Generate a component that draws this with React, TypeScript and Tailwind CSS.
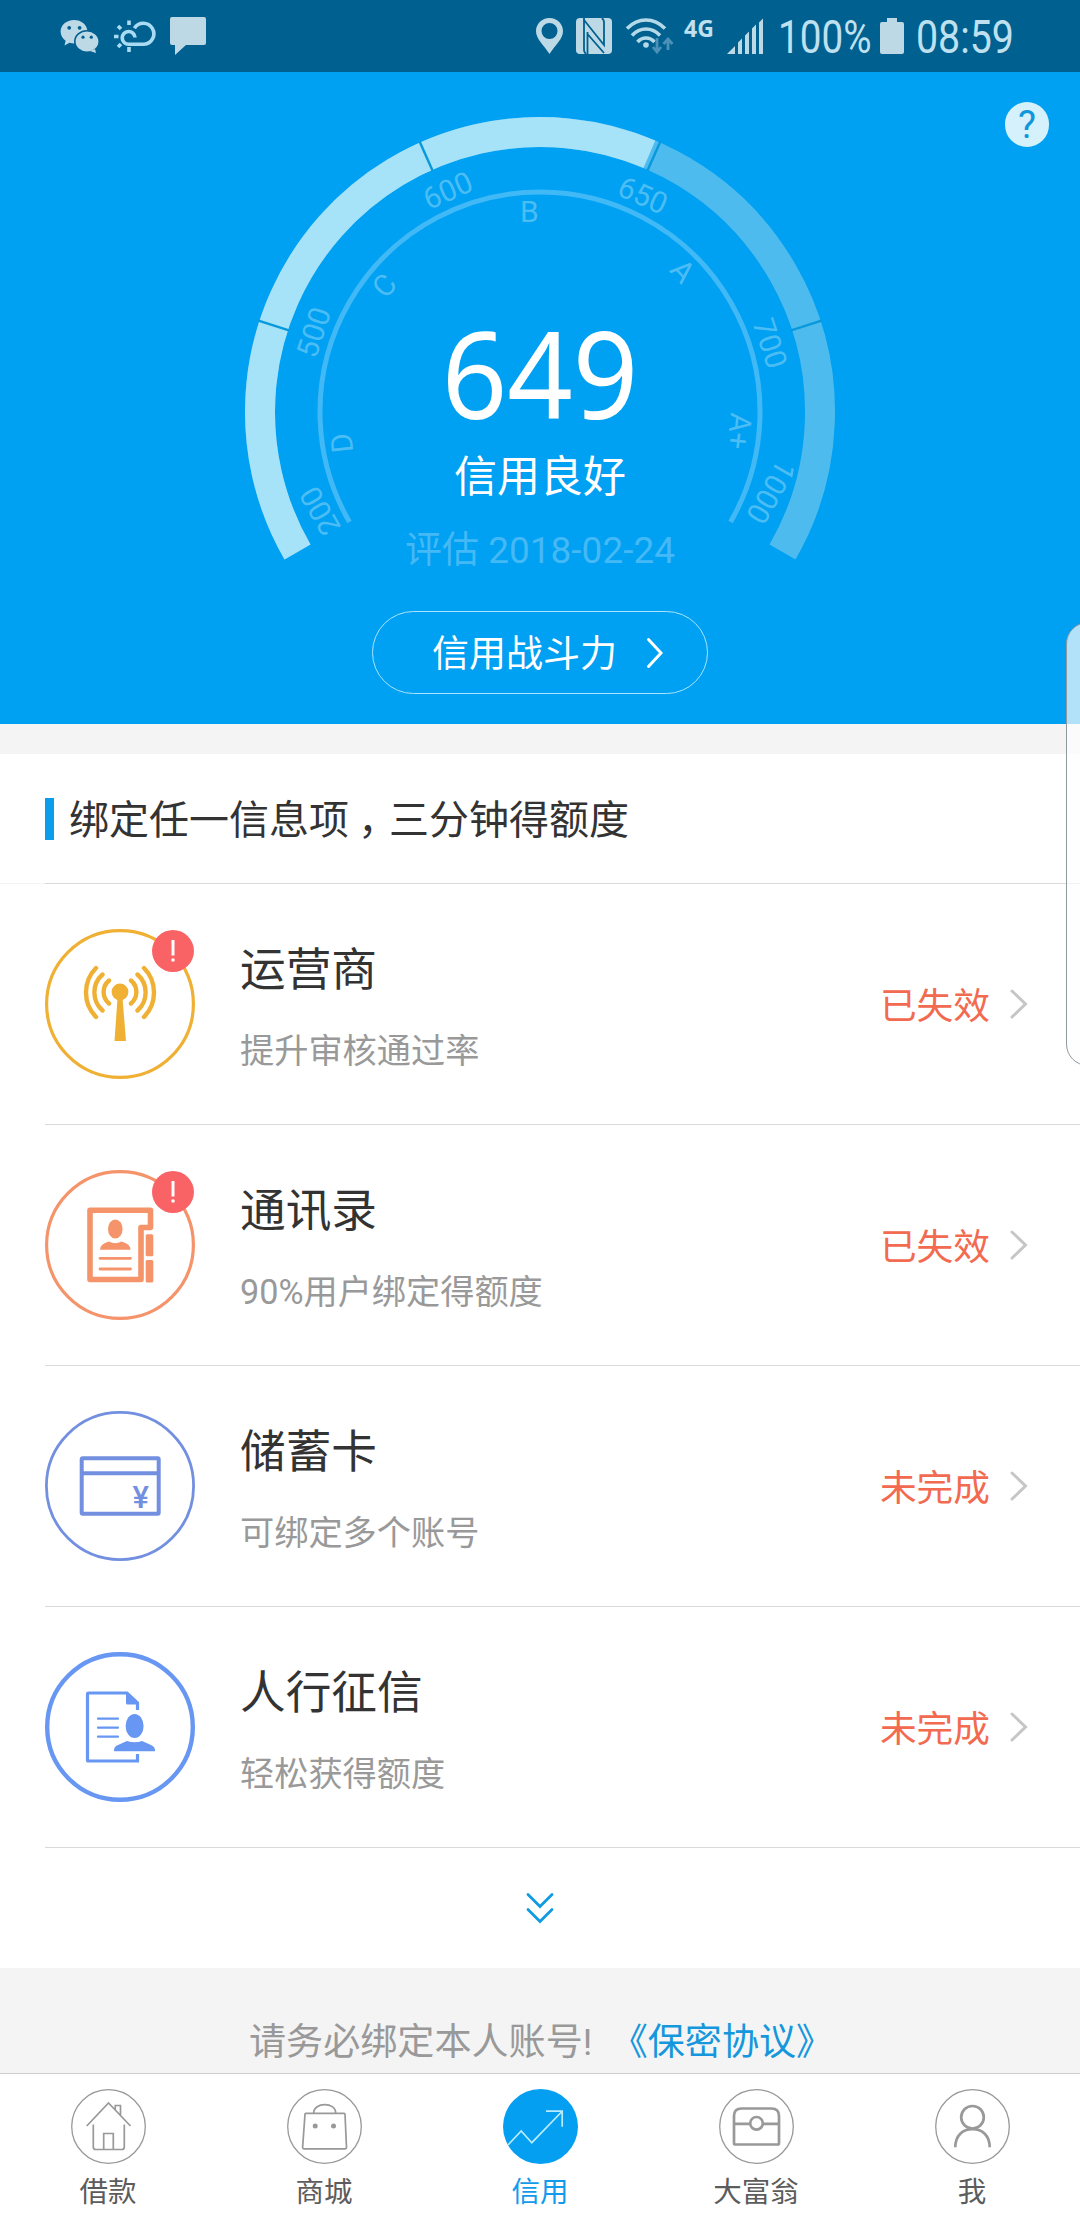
import type { ReactNode } from 'react';

const CX = 540;
const CY = 340;

// Degrees are measured clockwise from 12 o'clock.
function point(r: number, deg: number) {
  const a = (deg * Math.PI) / 180;
  return [CX + r * Math.sin(a), CY - r * Math.cos(a)];
}

function arc(r: number, from: number, to: number) {
  const [x1, y1] = point(r, from);
  const [x2, y2] = point(r, to);
  return `M${x1} ${y1}A${r} ${r} 0 ${to - from > 180 ? 1 : 0} 1 ${x2} ${y2}`;
}

function tick(deg: number) {
  const [x1, y1] = point(264, deg);
  const [x2, y2] = point(296, deg);
  return `M${x1} ${y1}L${x2} ${y2}`;
}

// dx shifts the label along its own baseline, away from the tick.
const MARKS = [
  { text: '200', deg: -120, r: 229.5, dx: -1 },
  { text: '500', deg: -72, r: 229.5, dx: -19.5 },
  { text: '600', deg: -24, r: 229.5, dx: -19.5 },
  { text: '650', deg: 24, r: 229.5, dx: -19.5 },
  { text: '700', deg: 72, r: 229.5, dx: -19.5 },
  { text: '1000', deg: 120, r: 229.5, dx: -80 },
  { text: 'D', deg: -96, r: 190, dx: -20 },
  { text: 'C', deg: -48, r: 190, dx: -20 },
  { text: 'B', deg: 0, r: 190, dx: -20 },
  { text: 'A', deg: 48, r: 190, dx: -19 },
  { text: 'A+', deg: 96, r: 190, dx: -20 },
];

function Gauge() {
  return (
    <svg className="absolute inset-0" width="1080" height="652" viewBox="0 0 1080 652" fill="none">
      <path d={arc(280, -120, 120)} stroke="#4dbbee" strokeWidth="30" />
      <path d={arc(280, -120, 23)} stroke="#a6e2f8" strokeWidth="30" />
      {[-72, -24, 24, 72].map((d) => (
        <path key={d} d={tick(d)} stroke="#0899db" strokeWidth="2.4" />
      ))}
      <path d={arc(220, -120, 120)} stroke="#40b9f6" strokeWidth="5" />
      <g fill="#4bbdf5" className="font-[Roboto,sans-serif] text-[30px]">
        {MARKS.map((m) => (
          <text key={m.text} x={CX + m.dx} y={CY - m.r} transform={`rotate(${m.deg} ${CX} ${CY})`}>
            {m.text}
          </text>
        ))}
      </g>
    </svg>
  );
}

function StatusBar() {
  return (
    <header className="flex h-[72px] items-center bg-[#00608f] text-[#bfe0ef]">
      <svg className="ml-[60px]" width="40" height="34" viewBox="0 0 40 34" fill="#bcd9e5">
        <path d="M14 1C6.500 1 .6 6 .6 12.500c0 4 2 7 5 9.200L4.500 26.500l5-2.700c1.500.4 3 .6 4.500.6 7.500 0 13.400-5.300 13.400-11.900S21.500 1 14 1z" />
        <ellipse cx="27" cy="22.500" rx="12.200" ry="10.800" stroke="#00608f" strokeWidth="1.600" />
        <path d="M30 32l6 2-1-4z" />
        <g fill="#00608f">
          <circle cx="9.200" cy="8.800" r="1.900" />
          <circle cx="19.600" cy="8.800" r="1.900" />
          <circle cx="23" cy="18.200" r="1.600" />
          <circle cx="31.300" cy="18.200" r="1.600" />
        </g>
      </svg>
      <svg className="ml-[13px]" width="43" height="34" viewBox="0 0 43 34" fill="none" stroke="#a9dcf3" strokeWidth="3.600">
        <path d="M22 18.500a6.400 6.400 0 1 0-6.300 6.800H31a10.500 10.500 0 1 0-9.600-16" />
        <path d="M16 1.500v4.500M16 28v5M1 17.500h4.500M5 7l3 3M5 28l3-3" />
      </svg>
      <svg className="ml-[14px]" width="36" height="38" viewBox="0 0 36 38" fill="#bcd9e5">
        <path d="M2 0h32q2 0 2 2v24q0 2-2 2H16L5 38V28H2q-2 0-2-2V2q0-2 2-2z" />
      </svg>

      <svg className="ml-[330px]" width="27" height="36" viewBox="0 0 27 36" fill="#bcd9e5">
        <path fillRule="evenodd" d="M13.500 0C6 0 0 5.800 0 13c0 8 7 13 13.500 23C20 26 27 21 27 13 27 5.800 21 0 13.500 0zm0 5a8 8 0 1 1 0 16 8 8 0 0 1 0-16z" />
      </svg>
      <svg className="ml-[13px]" width="36" height="36" viewBox="0 0 36 36">
        <rect width="36" height="36" rx="4" fill="#bcd9e5" />
        <g fill="none" stroke="#00608f" strokeWidth="1.800">
          <path d="M8 0v32q0 2 2 4" />
          <path d="M8 2l20 25V4q0-2-2-4" />
          <path d="M11.500 16l16.500 19M11.500 14v22" />
        </g>
      </svg>
      <svg className="ml-[13px]" width="51" height="36" viewBox="0 0 51 36" fill="none" stroke="#b4daea" strokeWidth="3.600">
        <path d="M2 10.500q8.500-8.500 19-8.500t19 8.500M7 17.500q6-6.500 14-6.500t14 6.500M12.500 24q3.500-4 8.500-4t8.500 4" />
        <circle cx="21" cy="27" r="2.800" fill="#b4daea" stroke="none" />
        <g stroke="#4b91b8" strokeWidth="2.800">
          <path d="M32 20v14M28 29l4 5 4-5" />
          <path d="M43 32V20M38.500 26l4.500-5 4.500 5" />
        </g>
      </svg>
      <span className="mb-[16px] ml-[8px] w-[30px] font-['Open_Sans',sans-serif] text-[23px] leading-none font-bold">4G</span>
      <svg className="ml-[13px]" width="37" height="36" viewBox="0 0 37 36" fill="#bcd9e5">
        <path d="M0 36L8 28v8zM11 24.500l4-4V36h-4zM18 17.500l4-4V36h-4zM25 10.500l4-4V36h-4zM32 4.500l4-4V36h-4z" />
      </svg>
      <span className="mt-[2px] ml-[14px] w-[102px] origin-left scale-x-[0.84] font-[Roboto,sans-serif] text-[46px] leading-none">100%</span>
      <svg width="24" height="36" viewBox="0 0 24 36" fill="#bcd9e5">
        <path d="M7 0h10v4h5q2 0 2 2v28q0 2-2 2H2q-2 0-2-2V6q0-2 2-2h5z" />
      </svg>
      <span className="mt-[2px] ml-[12px] w-[100px] origin-left scale-x-[0.855] font-[Roboto,sans-serif] text-[46px] leading-none">08:59</span>
    </header>
  );
}

interface Item {
  title: string;
  desc: string;
  status: string;
  color: string;
  ring: number;
  alert?: boolean;
  icon: ReactNode;
}

const ITEMS: Item[] = [
  {
    title: '运营商',
    desc: '提升审核通过率',
    status: '已失效',
    color: '#efb034',
    ring: 3.2,
    alert: true,
    icon: (
      <>
        <circle cx="75" cy="63" r="8.400" fill="currentColor" stroke="none" />
        <path d="M72.500 69h5l3.500 43H69.500z" fill="currentColor" stroke="none" />
        <path
          d="M86 51.500a15 15 0 0 1 0 23M92.500 45.500a24 24 0 0 1 0 36M99 39a35 35 0 0 1 0 49M64 51.500a15 15 0 0 0 0 23M57.500 45.500a24 24 0 0 0 0 36M51 39a35 35 0 0 0 0 49"
          strokeWidth="4.400"
          strokeLinecap="round"
        />
      </>
    ),
  },
  {
    title: '通讯录',
    desc: '90%用户绑定得额度',
    status: '已失效',
    color: '#f5936a',
    ring: 3.2,
    alert: true,
    icon: (
      <>
        <path d="M45 40.300h60.500V57.500H96v52H45z" strokeWidth="5.600" strokeLinejoin="round" />
        <rect x="100.700" y="64.300" width="7.600" height="22" rx="1.500" fill="currentColor" stroke="none" />
        <rect x="100.700" y="90" width="7.600" height="22.600" rx="1.500" fill="currentColor" stroke="none" />
        <ellipse cx="70.300" cy="59" rx="7.300" ry="9.600" fill="currentColor" stroke="none" />
        <path d="M55 79.800q0-6 9-8.300 6 3.500 12.500 0 9 2.300 9 8.300z" fill="currentColor" stroke="none" />
        <path d="M55 88.300h30.500M55 99h30.500" strokeWidth="2.800" strokeLinecap="round" />
      </>
    ),
  },
  {
    title: '储蓄卡',
    desc: '可绑定多个账号',
    status: '未完成',
    color: '#7390e0',
    ring: 2.8,
    icon: (
      <>
        <rect x="36.700" y="47.300" width="77" height="55.400" rx="1" strokeWidth="4" />
        <path d="M36 62.200h78" strokeWidth="4" />
        <text x="95.700" y="96.500" textAnchor="middle" fill="currentColor" stroke="none" className="font-[Roboto,sans-serif] text-[31px] font-medium">
          ¥
        </text>
      </>
    ),
  },
  {
    title: '人行征信',
    desc: '轻松获得额度',
    status: '未完成',
    color: '#6797f3',
    ring: 4.4,
    icon: (
      <>
        <path d="M92.500 58V51L82 41H43.500q-1 0-1 1v66q0 1 1 1h49v-7" strokeWidth="3.200" />
        <path d="M81 40l13 12.500H82.500q-1.500 0-1.500-1.500z" fill="currentColor" stroke="none" />
        <path d="M53 66.700h20M53 75.700h20M53 84.700h20" strokeWidth="2.200" strokeLinecap="round" />
        <ellipse cx="89.600" cy="74" rx="9" ry="12" fill="currentColor" stroke="none" />
        <path d="M69 99.300q-.5-4.500 4-6.300l9-4q7.500 2.500 15 0l9 4q4.500 2 4 6.300z" fill="currentColor" stroke="none" />
      </>
    ),
  },
];

function ItemRow({ item }: { item: Item }) {
  return (
    <li className="flex h-[241px] border-b border-[#d9d9d9]">
      <div className="relative mt-[45px] h-[150px] w-[150px]" style={{ color: item.color }}>
        <svg width="150" height="150" viewBox="0 0 150 150" fill="none" stroke="currentColor">
          <circle cx="75" cy="75" r={75 - item.ring / 2} strokeWidth={item.ring} />
          {item.icon}
        </svg>
        {item.alert && (
          <span className="absolute top-[1px] right-[1px] flex size-[42px] items-center justify-center rounded-full bg-[#fa6365]">
            <svg width="4" height="22" viewBox="0 0 4 22" fill="#fff">
              <path d="M.5 0h3v15.500h-3z" />
              <circle cx="2" cy="20" r="1.800" />
            </svg>
          </span>
        )}
      </div>
      <div className="ml-[45px] flex-1 pt-[54px]">
        <div className="text-[45.700px] leading-[66px] text-[#333]">{item.title}</div>
        <div className="mt-[23px] text-[34.200px] leading-[48px] text-[#999]">{item.desc}</div>
      </div>
      <span className="mt-[97px] text-[36.700px] leading-[52px] text-[#f26a50]">{item.status}</span>
      <svg className="mt-[104px] mr-[52px] ml-5" width="18" height="32" viewBox="0 0 18 32" fill="none" stroke="#c6c6c6" strokeWidth="3" strokeLinecap="round">
        <path d="M2 3l13.500 13L2 29" />
      </svg>
    </li>
  );
}

const TABS: { label: string; active?: boolean; icon: ReactNode }[] = [
  {
    label: '借款',
    icon: (
      <path d="M15.700 37L37.500 14l22 23M44.300 20.500v-4h5.200V26M22.300 35.500V58q0 2.500 2.500 2.500h26q2.500 0 2.500-2.500V35.500M32.700 60.500v-16h9.600v16" />
    ),
  },
  {
    label: '商城',
    icon: (
      <>
        <path d="M18.800 24.300h38.400q.8 0 .8.800l1.500 33.500q0 1.200-1.200 1.200H16.800q-1.200 0-1.200-1.200L18 25.100q0-.8.800-.8zM26.700 24c0-11 22-11.500 22 0" />
        <circle cx="28.200" cy="37" r="2.500" fill="#999" stroke="none" />
        <circle cx="46.500" cy="37" r="2.500" fill="#999" stroke="none" />
      </>
    ),
  },
  {
    label: '信用',
    active: true,
    icon: <path d="M5 56l13.200-14 10.600 11.700L59 22.500M43 22.200h16.200v15.500" stroke="#b9ecff" strokeWidth="1.700" />,
  },
  {
    label: '大富翁',
    icon: (
      <g strokeWidth="2.700">
        <path d="M15 54V27q0-7.500 7.500-7.500h30Q60 19.500 60 27v27q0 1.500-1.500 1.500h-42Q15 55.500 15 54zM15 34.800h16.500M43.500 34.800H60" />
        <circle cx="37.500" cy="34.300" r="6.300" />
      </g>
    ),
  },
  {
    label: '我',
    icon: (
      <g strokeWidth="2.700">
        <circle cx="37.500" cy="28.300" r="11.300" />
        <path d="M20.300 58.300c0-12 7.500-18.200 17.200-18.200s17.200 6.200 17.200 18.200" />
      </g>
    ),
  },
];

function TabBar() {
  return (
    <nav className="grid h-[147px] grid-cols-5 border-t border-[#cfcfcf] bg-white">
      {TABS.map((t) => (
        <div key={t.label} className="flex flex-col items-center pt-[15px]">
          <svg width="75" height="75" viewBox="0 0 75 75" fill="none" stroke="#999" strokeWidth="1.700">
            {t.active ? (
              <circle cx="37.500" cy="37.500" r="37.500" fill="#049ff1" stroke="none" />
            ) : (
              <circle cx="37.500" cy="37.500" r="36.800" strokeWidth="1.300" />
            )}
            {t.icon}
          </svg>
          <span className={t.active ? 'mt-[9px] text-[28.500px] leading-[40px] text-[#119bea]' : 'mt-[9px] text-[28.500px] leading-[40px] text-[#5c5c5c]'}>
            {t.label}
          </span>
        </div>
      ))}
    </nav>
  );
}

export default function App() {
  return (
    <div className="relative flex h-[2220px] w-[1080px] flex-col overflow-hidden bg-white font-[Roboto,'Noto_Sans_CJK_SC',sans-serif] whitespace-nowrap">
      <StatusBar />
      <section className="relative flex h-[652px] flex-col items-center bg-[#00a0f2] text-white">
        <Gauge />
        <span className="absolute top-[30px] right-[31px] flex h-[45px] w-[44px] items-center justify-center rounded-full bg-[#d5f1fb] text-[38px] leading-none text-[#0f96dc]">
          ?
        </span>
        <div className="mt-[241px] scale-x-[0.955] font-['Noto_Sans',sans-serif] text-[120px] leading-[120px]">649</div>
        <div className="mt-[14px] text-[43px] leading-[60px]">信用良好</div>
        <div className="mt-[18px] text-[37px] leading-[52px] text-[#45b9f5]">评估 2018-02-24</div>
        <button className="mt-[34px] flex h-[83px] w-[336px] items-center rounded-full border border-[#a8e6ff] pl-[59px] text-[37px]">
          <span className="pt-[5px]">信用战斗力</span>
          <svg className="ml-[29px]" width="18" height="32" viewBox="0 0 18 32" fill="none" stroke="#fff" strokeWidth="3" strokeLinecap="round">
            <path d="M2.500 2.500L15 16 2.500 29.500" />
          </svg>
        </button>
      </section>

      <section className="border-t-[30px] border-[#f4f4f4]">
        <div className="flex h-[130px] items-center border-b border-[#f4f4f4]">
          <span className="ml-[45px] h-[42px] w-[9px] bg-[#0b9ceb]" />
          <h2 className="ml-[15px] pt-[5px] text-[40px] text-[#333]">
            绑定任一信息项
            <span className="mr-[11px] ml-[9px] [font-feature-settings:'halt']">，</span>
            三分钟得额度
          </h2>
        </div>
        <ul className="-mt-px ml-[45px] border-t border-[#d9d9d9]">
          {ITEMS.map((item) => (
            <ItemRow key={item.title} item={item} />
          ))}
        </ul>
        <div className="flex h-[120px] items-center justify-center">
          <svg width="30" height="32" viewBox="0 0 30 32" fill="none" stroke="#0f9ae2" strokeWidth="2.800" strokeLinecap="round">
            <path d="M3 2.500l12 12 12-12M3 17.500l12 12 12-12" />
          </svg>
        </div>
      </section>

      <footer className="flex-1 bg-[#f4f4f4] pt-[48px] pl-[249px] text-[37.100px] leading-[54px] whitespace-pre text-[#999]">
        请务必绑定本人账号!{'  '}
        <a className="text-[#1497dc]">《保密协议》</a>
      </footer>
      <TabBar />

      {/* edge panel handle */}
      <div className="absolute top-[622px] -right-[30px] h-[444px] w-[44px] rounded-[22px] border border-[#8f9a9f] bg-[#fdfdfd]/70" />
    </div>
  );
}
